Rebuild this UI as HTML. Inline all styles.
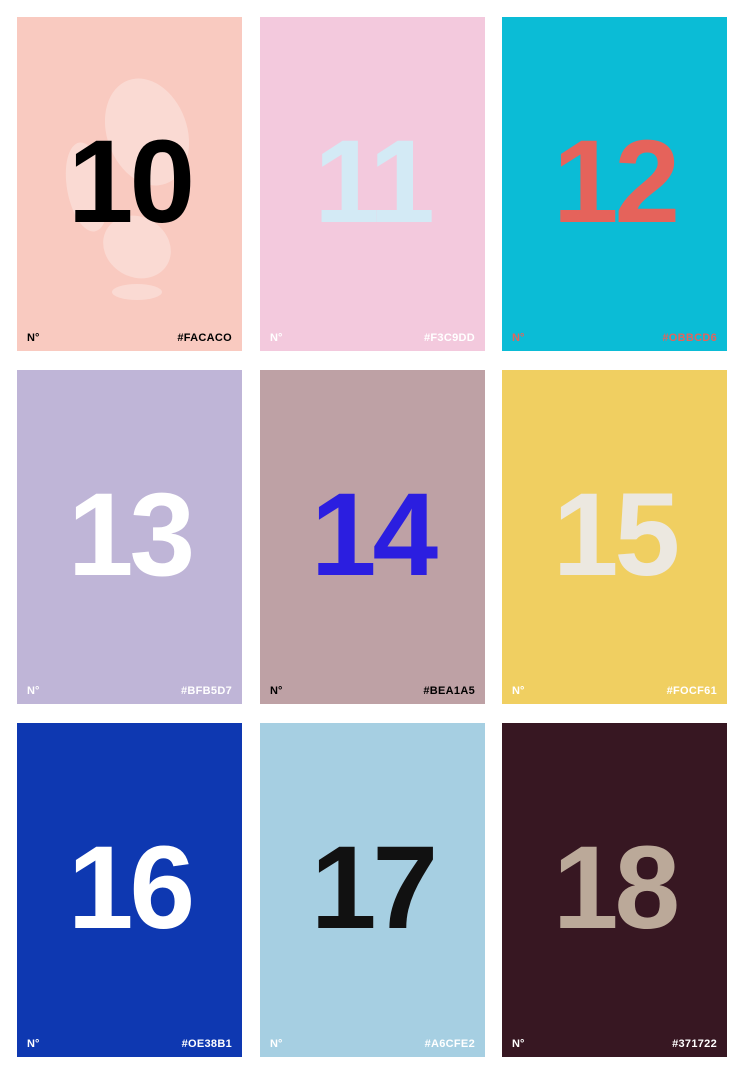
<!DOCTYPE html>
<html><head><meta charset="utf-8"><style>
html,body{margin:0;padding:0;background:#fff;width:750px;height:1074px;overflow:hidden}
.c{position:absolute;width:225px;height:334px;font-family:"Liberation Sans",sans-serif;font-weight:bold}
.n{position:absolute;left:0;right:0;top:106px;text-align:center;font-size:118px;line-height:118px;letter-spacing:-4px}
.a{position:absolute;left:10px;bottom:7px;font-size:11px}
.h{position:absolute;right:10px;bottom:7px;font-size:11px;letter-spacing:0.3px}
</style></head><body>
<div class="c" style="left:17px;top:17px;background:#F9CAC0;color:#000">
<svg width="225" height="334" style="position:absolute;left:0;top:0;opacity:.3">
<g fill="#fff"><ellipse cx="130" cy="115" rx="40" ry="55" transform="rotate(-20 130 115)"/><ellipse cx="70" cy="170" rx="20" ry="45" transform="rotate(-10 70 170)"/><ellipse cx="120" cy="230" rx="35" ry="30" transform="rotate(30 120 230)"/><ellipse cx="120" cy="275" rx="25" ry="8"/></g></svg>
<div class="n">10</div><div class="a">N°</div><div class="h">#FACACO</div></div>
<div class="c" style="left:260px;top:17px;background:#F3C9DD;color:#D3EAF5"><div class="n">11</div><div class="a" style="color:#fff">N°</div><div class="h" style="color:#fff">#F3C9DD</div></div>
<div class="c" style="left:502px;top:17px;background:#0BBCD6;color:#E5635B"><div class="n">12</div><div class="a">N°</div><div class="h">#OBBCD6</div></div>
<div class="c" style="left:17px;top:370px;background:#BFB5D7;color:#fff"><div class="n">13</div><div class="a">N°</div><div class="h">#BFB5D7</div></div>
<div class="c" style="left:260px;top:370px;background:#BEA1A5;color:#2B1EE0"><div class="n">14</div><div class="a" style="color:#000">N°</div><div class="h" style="color:#000">#BEA1A5</div></div>
<div class="c" style="left:502px;top:370px;background:#F0CF61;color:#ECE8E0"><div class="n">15</div><div class="a" style="color:#fff">N°</div><div class="h" style="color:#fff">#FOCF61</div></div>
<div class="c" style="left:17px;top:723px;background:#0E38B1;color:#fff"><div class="n">16</div><div class="a">N°</div><div class="h">#OE38B1</div></div>
<div class="c" style="left:260px;top:723px;background:#A6CFE2;color:#111"><div class="n">17</div><div class="a" style="color:#fff">N°</div><div class="h" style="color:#fff">#A6CFE2</div></div>
<div class="c" style="left:502px;top:723px;background:#371722;color:#BBA999"><div class="n">18</div><div class="a" style="color:#fff">N°</div><div class="h" style="color:#fff">#371722</div></div>
</body></html>
